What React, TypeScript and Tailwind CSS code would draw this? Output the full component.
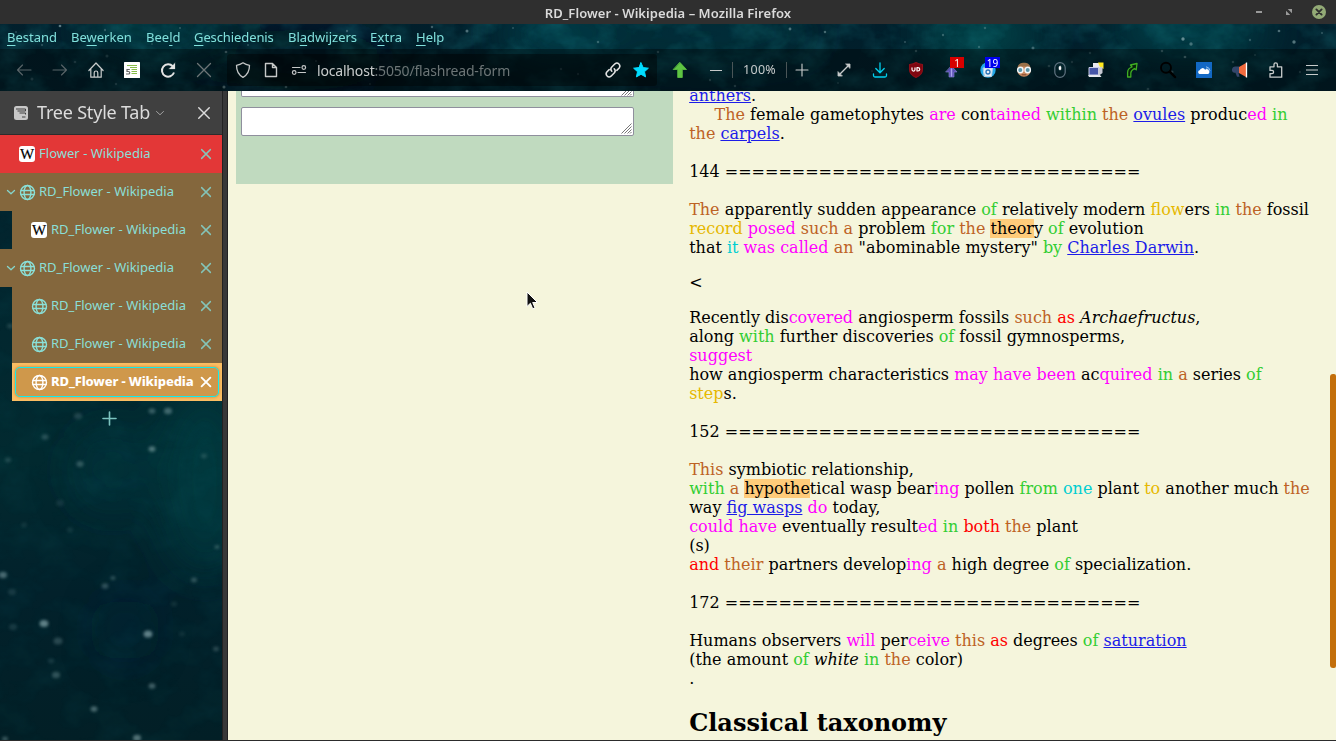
import React from "react";

const UI = "font-['Noto_Sans','Open_Sans',sans-serif]";

const tones: Record<string, string> = {
  b: "text-[#bd6225]",
  m: "text-[#ff00ff]",
  g: "text-[#32cd32]",
  y: "text-[#e6b800]",
  c: "text-[#00ced1]",
  r: "text-[#ff0000]",
  l: "text-[#1c1ce8] underline",
  h: "bg-[#ffcc7a]",
  i: "italic",
};

/* Inline markup: {tone:text} */
function Line({ t }: { t: string }) {
  const parts = t.split(/(\{[a-z]:[^}]*\})/g).filter(Boolean);
  return (
    <div className="h-[19px] whitespace-pre">
      {parts.map((p, i) => {
        const m = /^\{([a-z]):([^}]*)\}$/.exec(p);
        return m ? <span key={i} className={tones[m[1]]}>{m[2]}</span> : <span key={i}>{p}</span>;
      })}
    </div>
  );
}

const RULE = "=".repeat(31);

const first = [
  "{l:anthers}.",
  "     {b:The} female gametophytes {m:are} con{m:tained} {g:within} {b:the} {l:ovules} produc{m:ed} {g:in}",
  "{b:the} {l:carpels}.",
  "",
  "144 " + RULE,
  "",
  "{b:The} apparently sudden appearance {g:of} relatively modern {y:flow}ers {g:in} {b:the} fossil",
  "{y:record} {m:posed} {b:such} {b:a} problem {g:for} {b:the} {h:theor}y {g:of} evolution",
  'that {c:it} {m:was} {m:called} {b:an} "abominable mystery" {g:by} {l:Charles Darwin}.',
];

const second = [
  "Recently dis{m:covered} angiosperm fossils {b:such} {r:as} {i:Archaefructus},",
  "along {g:with} further discoveries {g:of} fossil gymnosperms,",
  "{m:suggest}",
  "how angiosperm characteristics {m:may} {m:have} {m:been} ac{m:quired} {g:in} {b:a} series {g:of}",
  "{y:step}s.",
  "",
  "152 " + RULE,
  "",
  "{b:This} symbiotic relationship,",
  "{g:with} {b:a} {h:hypothe}tical wasp bear{m:ing} pollen {g:from} {c:one} plant {y:to} another much {b:the}",
  "way {l:fig wasps} {m:do} today,",
  "{m:could} {m:have} eventually result{m:ed} {g:in} {r:both} {b:the} plant",
  "(s)",
  "{r:and} {b:their} partners develop{m:ing} {b:a} high degree {g:of} specialization.",
  "",
  "172 " + RULE,
  "",
  "Humans observers {m:will} per{m:ceive} {b:this} {r:as} degrees {g:of} {l:saturation}",
  "(the amount {g:of} {i:white} {g:in} {b:the} color)",
  ".",
];

const sideStars = [
  [152, 449, 3.4, 0.5], [80, 464, 3.6, 0.3], [45, 437, 3.5, 0.25], [3, 575, 4, 0.45], [113, 578, 2.6, 0.3],
  [105, 586, 3.4, 0.3], [44, 623.5, 4.4, 0.6], [148, 634, 4.4, 0.6], [194, 580, 3, 0.3], [216, 649, 3, 0.25],
  [56, 675, 4, 0.3], [152, 686, 3.4, 0.4], [94, 709, 3.4, 0.45], [137, 738, 4, 0.5], [58, 641, 4.5, 0.25],
  [204, 456, 3, 0.2], [8, 460, 3, 0.2], [217, 547, 2.6, 0.3], [152, 411, 3.4, 0.35], [168, 411, 4, 0.4],
  [78, 416, 4, 0.2], [5, 739, 3, 0.35], [12, 592, 4, 0.15], [24, 525, 3, 0.12], [10, 326, 3, 0.2],
  [13, 627, 4, 0.15], [70, 530, 3, 0.12], [60, 503, 4, 0.12], [182, 634, 3, 0.1], [51, 661, 3, 0.15], [174, 604, 3, 0.12],
];

const topStars = [
  [60, 26, 1.6, 0.6], [105, 30, 1.4, 0.3], [467, 31, 1.8, 0.5], [432, 27, 1.5, 0.4], [224, 87, 1.8, 0.6],
  [226, 52, 1.6, 0.5], [598, 42, 1.5, 0.35], [790, 29, 1.7, 0.5], [825, 32, 1.5, 0.45], [872, 71, 1.2, 0.2],
  [943, 35, 1.4, 0.35], [1183, 39, 2, 0.65], [1191, 44, 2, 0.45], [1033, 48, 1.8, 0.4], [1279, 31, 1.6, 0.5],
  [1294, 42, 2, 0.55], [1185, 57, 1.6, 0.5], [1162, 51, 1.5, 0.4], [1250, 40, 1.4, 0.3], [1049, 66, 1.6, 0.3],
  [1233, 62, 1.5, 0.35], [1172, 72, 1.8, 0.4], [1148, 89, 1.6, 0.3], [286, 87, 1.6, 0.4], [107, 56, 1.8, 0.25],
  [75, 62, 1.6, 0.25], [32, 79, 1.8, 0.25], [116, 84, 1.5, 0.25], [42, 45, 1.3, 0.3], [152, 44, 1.3, 0.2],
  [347, 31, 1.4, 0.35], [463, 72, 1.5, 0.3], [414, 74, 1.3, 0.2], [561, 69, 1.5, 0.3], [578, 74, 1.4, 0.25],
  [658, 52, 1.5, 0.3], [710, 80, 1.4, 0.3], [735, 86, 1.5, 0.3], [773, 73, 1.3, 0.25], [838, 83, 1.3, 0.2],
  [916, 51, 1.5, 0.35], [979, 47, 1.4, 0.3], [985, 28, 1.5, 0.3], [1090, 53, 1.5, 0.25], [1300, 72, 1.4, 0.25],
  [1322, 33, 1.3, 0.3], [248, 45, 1.3, 0.25], [316, 61, 1.3, 0.25], [513, 28, 1.2, 0.3], [370, 84, 1.3, 0.25],
  [1072, 62, 1.4, 0.25], [180, 28, 1.3, 0.3], [16, 32, 1.2, 0.25], [1255, 55, 1.2, 0.25], [905, 42, 1.3, 0.3],
];

function Sky() {
  return (
    <svg className="absolute inset-0 -z-10" width="1336" height="741" viewBox="0 0 1336 741">
      <defs>
        <filter id="soft" x="-50%" y="-50%" width="200%" height="200%"><feGaussianBlur stdDeviation="1.5" /></filter>
        <filter id="fine" x="-50%" y="-50%" width="200%" height="200%"><feGaussianBlur stdDeviation="0.6" /></filter>
        <filter id="haze" x="-50%" y="-50%" width="200%" height="200%"><feGaussianBlur stdDeviation="22" /></filter>
        <filter id="cloud" x="0" y="0" width="100%" height="100%">
          <feTurbulence type="fractalNoise" baseFrequency="0.03 0.04" numOctaves="4" seed="7" />
          <feColorMatrix values="0 0 0 0 0.02  0 0 0 0 0.42  0 0 0 0 0.46  1.6 0 0 0 -0.62" />
        </filter>
        <linearGradient id="side" x1="0" y1="0" x2="0" y2="1">
          <stop offset="0" stopColor="#021f2c" />
          <stop offset="0.62" stopColor="#022a30" />
          <stop offset="0.8" stopColor="#02212b" />
          <stop offset="1" stopColor="#021f26" />
        </linearGradient>
      </defs>
      <rect width="1336" height="741" fill="url(#side)" />
      <g filter="url(#haze)">
        <ellipse cx="205" cy="480" rx="45" ry="95" fill="#01464b" opacity="0.5" />
        <ellipse cx="110" cy="470" rx="35" ry="40" fill="#03404a" opacity="0.4" />
        <ellipse cx="125" cy="630" rx="22" ry="30" fill="#03254b" opacity="0.35" />
        <ellipse cx="155" cy="28" rx="70" ry="22" fill="#045052" opacity="0.6" />
        <ellipse cx="560" cy="34" rx="60" ry="26" fill="#055058" opacity="0.7" />
        <ellipse cx="700" cy="34" rx="120" ry="22" fill="#03414a" opacity="0.6" />
        <ellipse cx="980" cy="34" rx="60" ry="28" fill="#056060" opacity="0.6" />
        <ellipse cx="1190" cy="30" rx="80" ry="24" fill="#055a60" opacity="0.6" />
        <ellipse cx="300" cy="60" rx="90" ry="30" fill="#011420" opacity="0.7" />
      </g>
      <rect y="24" width="1336" height="67" filter="url(#cloud)" opacity="0.3" />
      <rect y="200" width="222" height="541" filter="url(#cloud)" opacity="0.07" />
      <g fill="#a9c8cc" filter="url(#soft)">
        {sideStars.map(([x, y, r, o], i) => <ellipse key={i} cx={x} cy={y} rx={r} ry={r * 0.8} opacity={o * 0.95} />)}
      </g>
      <g fill="#a9c8cc" filter="url(#fine)">
        {topStars.map(([x, y, r, o], i) => <circle key={i} cx={x} cy={y} r={r * 0.85} opacity={o * 0.9} />)}
      </g>
    </svg>
  );
}

function Ico({ children, s = 16, c = "", sw = 1.3 }: { children: React.ReactNode; s?: number; c?: string; sw?: number }) {
  return (
    <svg width={s} height={s} viewBox="0 0 16 16" fill="none" stroke="currentColor" strokeWidth={sw} strokeLinecap="round" strokeLinejoin="round" className={"shrink-0 overflow-visible " + c}>
      {children}
    </svg>
  );
}

function Cell({ children, w = "w-9" }: { children: React.ReactNode; w?: string }) {
  return <div className={"relative flex h-full shrink-0 items-center justify-center " + w}>{children}</div>;
}

function Menu({ pre, k, post, w }: { pre: string; k: string; post: string; w: string }) {
  return (
    <span className={"shrink-0 whitespace-nowrap " + w}>
      {pre}<span className="underline decoration-1 underline-offset-[3px]">{k}</span>{post}
    </span>
  );
}

function Globe({ c }: { c: string }) {
  return (
    <Ico c={c} sw={1.4}>
      <circle cx="8.500" cy="8.500" r="7" />
      <ellipse cx="8.500" cy="8.500" rx="3.400" ry="7" />
      <path d="M2 6.500h13M2 10.500h13" />
    </Ico>
  );
}

function WikiMark() {
  return (
    <span className="flex h-4 w-4 shrink-0 items-center justify-center rounded-[3px] bg-white font-['Liberation_Serif',serif] text-[15px] leading-none text-black">
      <span className="[-webkit-text-stroke:0.2px_black]">W</span>
    </span>
  );
}

function Tab({ label, wiki, level, open, tone }: { label: string; wiki?: boolean; level: number; open?: boolean; tone: string }) {
  return (
    <div className={"flex h-[38px] shrink-0 items-center " + tone + (level ? " ml-3" : "")}>
      <div className="flex w-[19px] shrink-0 items-center pl-[7px]">
        {open && <Ico s={8} c="text-[#85d5cc]" sw={2.6}><path d="M1 5l7 6.500l7-6.500" /></Ico>}
      </div>
      {wiki ? <WikiMark /> : <Globe c="text-[#8ae0d8]" />}
      <span className="ml-[4px] flex-1 whitespace-nowrap text-[13px] tracking-[0.02px] text-[#8adfd7]">{label}</span>
      <Ico s={10} c="mr-[11px] text-[#84c4b8]" sw={2.3}><path d="M1 1l14 14M15 1L1 15" /></Ico>
    </div>
  );
}

function Grip() {
  return (
    <svg width="12" height="12" viewBox="0 0 12 12" stroke="#777" strokeWidth="1" className="overflow-visible">
      <path d="M1.500 11.500l10-10M4.500 11.500l7-7M7.500 11.500l4-4M10 11.500l1.500-1.500" />
    </svg>
  );
}

export default function App() {
  return (
    <div className={"relative isolate flex h-[741px] w-[1336px] flex-col overflow-hidden text-[13px] " + UI}>
      <Sky />

      <header className="flex h-6 shrink-0 items-center bg-[#2f2f2f]">
        <div className="w-[110px]" />
        <div className="flex-1 pl-[6px] text-center text-[13px] leading-6 font-semibold tracking-[0.05px] text-[#dadada]">
          <span className="relative top-px">RD_Flower - Wikipedia – Mozilla Firefox</span>
        </div>
        <div className="flex w-[116px] items-center pl-[36px]">
          <div className="h-[2px] w-[6px] bg-[#9a9a9a]" />
          <svg className="ml-[24px]" width="6" height="6" viewBox="0 0 7 7" fill="#9a9a9a"><path d="M2 0h5v5zM0 2v5h5z" /></svg>
          <div className="ml-[20px] flex h-[14px] w-[14px] items-center justify-center rounded-full bg-[#93aa76]">
            <Ico s={6} c="text-[#2f2f2f]" sw={5}><path d="M1 1l14 14M15 1L1 15" /></Ico>
          </div>
        </div>
      </header>

      <nav className="flex h-[25px] shrink-0 items-center pt-[2px] pl-[7px] text-[13px] text-[#80e0dc]">
        <Menu pre="" k="B" post="estand" w="w-[64px]" />
        <Menu pre="Be" k="w" post="erken" w="w-[75px]" />
        <Menu pre="Bee" k="l" post="d" w="w-[48px]" />
        <Menu pre="" k="G" post="eschiedenis" w="w-[94px] tracking-[-0.1px]" />
        <Menu pre="Bl" k="a" post="dwijzers" w="w-[82px]" />
        <Menu pre="E" k="x" post="tra" w="w-[46px] tracking-[0.2px]" />
        <Menu pre="" k="H" post="elp" w="w-[40px]" />
      </nav>

      <div className="flex h-[42px] shrink-0 items-center bg-black/35 pl-[6px] text-[#c9cccc]">
        <Cell><Ico c="text-[#596468]" sw={1.1}><path d="M15 8H1.500M6.500 3L1.500 8L6.500 13" /></Ico></Cell>
        <Cell><Ico c="text-[#596468]" sw={1.1}><path d="M1 8h13.500M9.500 3L14.500 8L9.500 13" /></Ico></Cell>
        <Cell><Ico sw={1.2}><path d="M.9 8.500L8 1l7.100 7.500M2.800 7V15.200h10.400V7M6.200 15v-4.200a1.800 1.800 0 0 1 3.600 0V15" /></Ico></Cell>
        <Cell>
          <svg width="16" height="16" viewBox="0 0 16 16">
            <rect width="16" height="16" rx=".6" fill="#fff" />
            <path d="M3 3.500h10M6 5.500h7M7.500 7.500h5.500M7.500 9.500h5.500M7.500 11.500h5.500" stroke="#86bd4a" />
            <path d="M5.800 7.500H3v2h1.500a1.200 1.200 0 0 1 0 2.500H2" fill="none" stroke="#666" strokeWidth="1.200" />
          </svg>
        </Cell>
        <Cell><Ico sw={2} c="text-[#e4e4e4]"><path d="M14 10.500a6.200 6.200 0 1 1-1.200-6.200" strokeLinecap="butt" /><path d="M15 1v6H9z" fill="currentColor" strokeWidth=".2" /></Ico></Cell>
        <Cell><Ico c="text-[#6d7576]" sw={1.300}><path d="M1.500 1.500l13 13M14.500 1.500l-13 13" /></Ico></Cell>

        <div className="ml-[5px] flex h-8 w-[430px] shrink-0 items-center rounded-[3px] bg-black/40 pl-[8px]">
          <Ico c="text-[#c6c8c8]"><path d="M8 .8c2.300 1.700 4.500 2.300 6.500 2.500 0 5.700-2 9.700-6.500 12-4.500-2.300-6.500-6.300-6.500-12C3.500 3.100 5.700 2.500 8 .8z" /></Ico>
          <Ico c="ml-[12px] text-[#c6c8c8]" sw={1.400}><path d="M2.500 1.500h7l4 4v9h-11zM9.500 1.500v4h4" /></Ico>
          <Ico c="ml-[12px] text-[#c6c8c8]" sw={1.200}><path d="M1.500 5.500h7.500M7 10.500h7.500" /><circle cx="12.800" cy="5.500" r="1.800" /><circle cx="3.200" cy="10.500" r="1.800" /></Ico>
          <span className="ml-[10px] flex-1 whitespace-nowrap text-[14px] tracking-[-0.18px] text-[#6c7576]"><span className="text-[#c8cccc]">localhost</span>:5050/flashread-form</span>
          <Ico c="mr-[12px] text-[#e4e4e4]" sw={1.500}>
            <path d="M6.800 9.200a3 3 0 0 1 0-4.200L10 1.800a3 3 0 0 1 4.200 4.200L11.800 8.400M9.200 6.800a3 3 0 0 1 0 4.200L6 14.200A3 3 0 0 1 1.800 10L4.200 7.600" />
          </Ico>
          <Ico c="mr-[8px] text-[#00dcff]" sw={1}><path fill="currentColor" d="M8 .8l2.200 4.800 5.200.6-3.900 3.500 1.100 5.200L8 12.300l-4.600 2.600 1.100-5.200L.6 6.200l5.200-.6z" /></Ico>
        </div>

        <div className="ml-[5px] flex h-full items-center">
          <Cell><Ico c="text-[#5ec442]" sw={.8}><path fill="currentColor" d="M8 .5l6.500 7h-4.200v8H5.700v-8H1.500z" /></Ico></Cell>
          <Cell w="w-[34px]"><div className="mt-px ml-px h-px w-3 bg-[#c6caca]" /></Cell>
          <div className="h-4 w-px bg-[#4a5557]" />
          <span className="w-[53px] text-center text-[12.5px] tracking-[0.25px] text-[#c6caca]">100%</span>
          <div className="h-4 w-px bg-[#4a5557]" />
          <Cell w="w-[29px]"><Ico s={12} sw={1.500}><path d="M8 0v16M0 8h16" /></Ico></Cell>
        </div>
        <div className="ml-[10px] flex h-full items-center">
          <Cell><Ico sw={1.400}><path d="M3 13L13 3" /><path d="M10 2H14v4zM2 10V14h4z" fill="currentColor" strokeWidth=".8" /></Ico></Cell>
          <Cell><Ico c="text-[#00d0ee]" sw={1.300}><path d="M8 .8v9.700M3.800 6.500L8 10.700l4.200-4.200M1.500 12v1.500a1.500 1.500 0 0 0 1.500 1.500h10a1.500 1.500 0 0 0 1.500-1.500V12" /></Ico></Cell>
          <Cell>
            <Ico sw={1.100}>
              <path d="M8 .5c2 1.400 4.500 1.800 6.500 2v5c0 4-3 6.500-6.500 8-3.500-1.500-6.500-4-6.500-8v-5c2-.2 4.500-.6 6.500-2z" fill="#800610" stroke="#8d1018" />
              <path d="M4 5.800v1.800a1.500 1.500 0 0 0 3 0V5.800M9 5.600v3.400h1a1.700 1.700 0 0 0 0-3.400z" stroke="#fff" strokeWidth="1.200" />
            </Ico>
          </Cell>
          <Cell>
            <Ico sw={.6} c="text-[#8e86d8]"><path d="M7.500 4l5.500 6h-3V15H5v-5H2z" fill="#5b50b5" /><path d="M7.500 7v7" stroke="#aaa4ee" strokeWidth="1.500" /></Ico>
            <span className="absolute top-[8px] left-[16px] flex h-[11px] w-[14px] items-center justify-center bg-[#d80000] text-[10px] leading-none text-white">1</span>
          </Cell>
          <Cell>
            <Ico sw={1}><circle cx="8" cy="8" r="7.700" fill="#22a7e8" stroke="none" /><path d="M3.500 6h9l-1 8.500h-7z" fill="#e8eef4" stroke="#b7d3e8" /><circle cx="8" cy="10" r="2" stroke="#2b72b8" strokeWidth="1.300" /></Ico>
            <span className="absolute top-[8px] left-[15px] flex h-[11px] w-[15px] items-center justify-center bg-[#0000ee] text-[10px] leading-none text-white">19</span>
          </Cell>
          <Cell>
            <Ico sw={1}>
              <circle cx="8" cy="8" r="6.800" fill="#c98a60" stroke="none" /><path d="M1.500 6C2 2 5 .8 8 .8S14 2 14.500 6C11 4 5 4 1.500 6z" fill="#9a7048" stroke="none" />
              <circle cx="4.300" cy="8" r="2.700" fill="#5b96a8" stroke="#f4f8fa" strokeWidth="1.400" /><circle cx="11.700" cy="8" r="2.700" fill="#5b96a8" stroke="#f4f8fa" strokeWidth="1.400" />
              <path d="M6 12.800h4" stroke="#7c4630" />
            </Ico>
          </Cell>
          <Cell><Ico c="text-[#607380]" sw={1.200}><rect x="2.800" y=".6" width="10.400" height="14.800" rx="5.200" /><rect x="7" y="4.200" width="2" height="3.800" rx="1" fill="#fff" stroke="#fff" strokeWidth=".5" /></Ico></Cell>
          <Cell>
            <svg width="16" height="16" viewBox="0 0 16 16">
              <path d="M5 1h9v9H5z" fill="#e8e8f0" /><path d="M10 .5h5.500V7L12 5z" fill="#ffe81c" /><path d="M1 5.500h9.500V13H1z" fill="#4656a8" stroke="#c9cde6" /><path d="M0 13h12l1.500 2H1z" fill="#e8e9ef" /><path d="M10.500 6l4-1.500V11l-4 3z" fill="#c6c8d2" />
            </svg>
          </Cell>
          <Cell><Ico sw={1.300} c="text-[#3fae22]"><path d="M3.600 15V10.500C3.600 8 5.500 5.800 8 5L6.500 3 13 1.500 12.200 7.800 10.400 6.500C8 8 6.800 9 6.800 11V15z" fill="#06200c" /></Ico></Cell>
          <Cell><Ico sw={1.900} c="text-black"><circle cx="6" cy="5.800" r="5" /><path d="M9.800 9.600l5.200 5.400" strokeWidth="2.500" /></Ico></Cell>
          <Cell>
            <svg width="16" height="16" viewBox="0 0 16 16"><rect width="16" height="16" fill="#1268c4" /><path d="M3.500 12a1.900 1.900 0 0 1 .2-3.700 2.900 2.900 0 0 1 5.400-.6A2.300 2.300 0 0 1 12.200 12z" fill="#fff" /><path d="M10 4.800a4.500 4.500 0 0 1 4 4M10.500 6.500a3 3 0 0 1 2 2" stroke="#b4d8f8" strokeWidth=".8" fill="none" /></svg>
          </Cell>
          <Cell>
            <svg width="16" height="16" viewBox="0 0 16 16"><path d="M7 5l7-4v14l-7-4z" fill="#f26a3d" /><path d="M14.500 .5v15" stroke="#fff" strokeWidth="1.300" /><path d="M7 4.500H3a3.200 3.200 0 0 0-1 6.200h1.500l1.500 4h2.500L6.500 11H7z" fill="#34466a" /></svg>
          </Cell>
          <Cell><Ico sw={1.300}><path d="M6 4.800V2.500a1.700 1.700 0 0 1 3.400 0v2.300h4.300v10.400H2v-3.600h2a1.600 1.600 0 0 0 0-3.200H2V4.800z" /></Ico></Cell>
          <Cell><Ico sw={1}><path d="M2 3.500h12M2 8h12M2 12.500h12" strokeLinecap="butt" /></Ico></Cell>
        </div>
      </div>

      <div className="flex h-[649px] shrink-0">
        <aside className="flex w-[222px] shrink-0 flex-col">
          <div className="flex h-11 shrink-0 items-center border-b border-[#2c2c2c] bg-[#404040] pl-[14px] text-[#dcdcdc]">
            <svg width="14" height="14" viewBox="0 0 14 14"><rect width="14" height="14" rx="2.500" fill="#c8c8c8" /><path d="M2 3h9.500v2H3.500M5.500 7h6v1.500M8 11h3.500" stroke="#404040" fill="none" /></svg>
            <span className="ml-[9px] whitespace-nowrap text-[18px] tracking-[-0.2px]">Tree Style Tab</span>
            <Ico s={8} c="ml-[6px] text-[#a0a0a0]" sw={2}><path d="M1 5l7 6.500L15 5" /></Ico>
            <Ico s={12} c="ml-auto mr-[12px]" sw={1.900}><path d="M1 1l14 14M15 1L1 15" /></Ico>
          </div>
          <Tab label="Flower - Wikipedia" wiki level={0} tone="bg-[#e33737]" />
          <Tab label="RD_Flower - Wikipedia" level={0} open tone="bg-[#84673d]" />
          <Tab label="RD_Flower - Wikipedia" wiki level={1} tone="bg-[#84673d]" />
          <Tab label="RD_Flower - Wikipedia" level={0} open tone="bg-[#84673d]" />
          <Tab label="RD_Flower - Wikipedia" level={1} tone="bg-[#84673d]" />
          <Tab label="RD_Flower - Wikipedia" level={1} tone="bg-[#84673d]" />
          <div className="ml-3 flex h-[38px] shrink-0 bg-[#fbbd62] px-[3px] py-1">
            <div className="flex flex-1 items-center rounded-[5px] border border-[#14ecec] bg-[#cf984b] pl-[15px] shadow-[0_0_3px_0px_#b8803a]">
              <Globe c="text-white" />
              <span className="ml-[4px] flex-1 whitespace-nowrap text-[13px] font-extrabold tracking-[-0.12px] text-white">RD_Flower - Wikipedia</span>
              <Ico s={10} c="mr-[7px] text-white" sw={3}><path d="M1 1l14 14M15 1L1 15" /></Ico>
            </div>
          </div>
          <div className="flex h-[34px] items-center justify-center pr-[4px]">
            <Ico s={13} c="text-[#7cc4c0]" sw={2}><path d="M8 0v16M0 8h16" /></Ico>
          </div>
        </aside>
        <div className="w-[6px] shrink-0 border-x border-[#222] bg-[#383838]" />

        <main className="flex flex-1 overflow-hidden bg-[#f5f5dc]">
          <div className="ml-2 h-[93px] w-[437px] shrink-0 bg-[#c0dabf] pl-[5px]">
            <div className="flex h-[6px] w-[393px] items-end justify-end rounded-b-[2px] border border-t-0 border-[#8f8f9d] bg-white pr-px">
              <div className="flex h-[5px] items-end overflow-hidden"><Grip /></div>
            </div>
            <div className="mt-[10px] flex h-[29px] w-[393px] items-end justify-end rounded-[2px] border border-[#8f8f9d] bg-white p-px"><Grip /></div>
          </div>
          <article className="-mt-[5px] ml-4 flex-1 pl-[0.15px] font-['DejaVu_Serif',serif] text-[16px] leading-[19px] text-black">
            {first.map((t, i) => <Line key={i} t={t} />)}
            <div className="my-4"><Line t="<" /></div>
            {second.map((t, i) => <Line key={i} t={t} />)}
            <h2 className="mt-[21px] text-[24px] leading-[28px] font-bold">Classical taxonomy</h2>
          </article>
          <div className="mt-[283px] h-[294px] w-[6px] shrink-0 rounded-l-[3px] rounded-r-[2px] bg-[#c36f0b]" />
        </main>
      </div>
      <div className="h-px shrink-0 bg-[#2c2c2c]" />

      <svg className="absolute top-[291px] left-[526px]" width="13" height="20" viewBox="0 0 13 20">
        <path d="M1 1v14.500l3.400-3.200 2.300 5.500 2.300-1-2.300-5.300h4.800z" fill="#111" stroke="#fff" strokeWidth="1" />
      </svg>
    </div>
  );
}
